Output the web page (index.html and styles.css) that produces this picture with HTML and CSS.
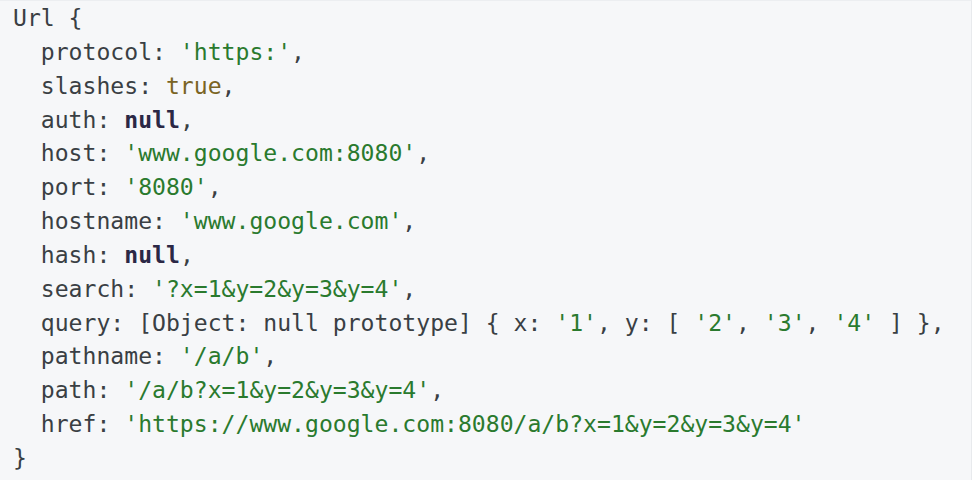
FILE: index.html
```html
<!DOCTYPE html>
<html>
<head>
<meta charset="utf-8">
<link rel="stylesheet" href="styles.css">
</head>
<body>
<pre class="code"><span class="p">Url {</span>
  <span class="k">protocol</span><span class="p">:</span> <span class="s">'https:'</span><span class="p">,</span>
  <span class="k">slashes</span><span class="p">:</span> <span class="b">true</span><span class="p">,</span>
  <span class="k">auth</span><span class="p">:</span> <span class="n">null</span><span class="p">,</span>
  <span class="k">host</span><span class="p">:</span> <span class="s">'www.google.com:8080'</span><span class="p">,</span>
  <span class="k">port</span><span class="p">:</span> <span class="s">'8080'</span><span class="p">,</span>
  <span class="k">hostname</span><span class="p">:</span> <span class="s">'www.google.com'</span><span class="p">,</span>
  <span class="k">hash</span><span class="p">:</span> <span class="n">null</span><span class="p">,</span>
  <span class="k">search</span><span class="p">:</span> <span class="s">'?x=1&amp;y=2&amp;y=3&amp;y=4'</span><span class="p">,</span>
  <span class="k">query</span><span class="p">: [Object: null prototype] { x:</span> <span class="s">'1'</span><span class="p">, y: [</span> <span class="s">'2'</span><span class="p">,</span> <span class="s">'3'</span><span class="p">,</span> <span class="s">'4'</span> <span class="p">] },</span>
  <span class="k">pathname</span><span class="p">:</span> <span class="s">'/a/b'</span><span class="p">,</span>
  <span class="k">path</span><span class="p">:</span> <span class="s">'/a/b?x=1&amp;y=2&amp;y=3&amp;y=4'</span><span class="p">,</span>
  <span class="k">href</span><span class="p">:</span> <span class="s">'https://www.google.com:8080/a/b?x=1&amp;y=2&amp;y=3&amp;y=4'</span>
<span class="p">}</span></pre>
</body>
</html>
```
FILE: styles.css
```css
html, body {
  margin: 0;
  padding: 0;
  background: #f6f7f9;
}
.code {
  margin: 0;
  height: 480px;
  box-sizing: border-box;
  padding: 1px 0 0 13px;
  font-family: "DejaVu Sans Mono", "Liberation Mono", monospace;
  font-size: 23.1px;
  line-height: 33.85px;
  color: #3a3f44;
  background: #f6f7f9;
  border-top: 1px solid #eceef1;
  border-right: 1px solid #e8eaed;
}
.p { color: #3a3f44; }
.k { color: #3a3f44; }
.s { color: #2a7a2e; }
.b { color: #7a6424; }
.n { color: #2b2846; font-weight: bold; }
```
